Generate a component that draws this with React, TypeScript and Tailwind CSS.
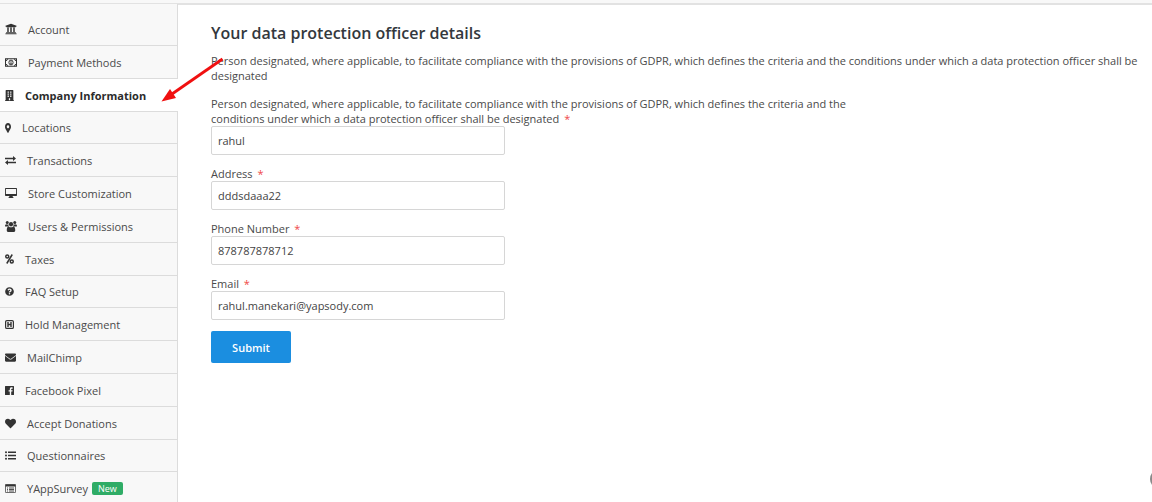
import { useState } from "react";
import type { ReactNode } from "react";
import {
  FaBuilding,
  FaEnvelope,
  FaHeart,
  FaMapMarkerAlt,
  FaQuestionCircle,
  FaUniversity,
} from "react-icons/fa";

const MoneyIcon = () => (
  <svg className="w-3 h-[9px]" viewBox="0 0 24 18" fill="none" stroke="currentColor" strokeWidth={2}>
    <rect x="1" y="1.500" width="22" height="15" />
    <ellipse cx="12" cy="9" rx="4.200" ry="4.800" />
    <path d="M12 6v6M10.500 11.500h3" strokeWidth={1.600} />
    <path d="M1 5.500a4 4 0 0 0 4-4M23 5.500a4 4 0 0 1-4-4M1 12.500a4 4 0 0 1 4 4M23 12.500a4 4 0 0 0-4 4" />
  </svg>
);

const ExchangeIcon = () => (
  <svg className="w-[11px] h-[9px]" viewBox="0 0 22 18" fill="currentColor">
    <path d="M0 3.500h16V0l6 5-6 5V6.500H0zM22 11.500H6V8l-6 5 6 5v-3.500h16z" />
  </svg>
);

const DesktopIcon = () => (
  <svg className="w-3 h-[10px]" viewBox="0 0 24 20" fill="currentColor">
    <path d="M1.500 0h21A1.500 1.500 0 0 1 24 1.500v13a1.500 1.500 0 0 1-1.500 1.500H15l1 2.500h1V20H7v-1.500h1L9 16H1.500A1.500 1.500 0 0 1 0 14.500v-13A1.500 1.500 0 0 1 1.500 0zM1.800 1.800v10.400h20.400V1.800z" />
  </svg>
);

const UsersIcon = () => (
  <svg className="w-3 h-[11px]" viewBox="0 0 24 22" fill="currentColor">
    <circle cx="4.500" cy="3.200" r="3" />
    <circle cx="19.500" cy="3.200" r="3" />
    <circle cx="12" cy="6.500" r="4.300" />
    <path d="M0 10.500C0 8 1 6.300 2.500 6.300c1 .8 3 .9 4.200.5 0 1.800.5 3.200 1.700 4.200H1.500C.6 11 0 11 0 10.500zM24 10.500c0-2.500-1-4.200-2.500-4.200-1 .8-3 .9-4.200.5 0 1.800-.5 3.200-1.700 4.200h6.900c.9 0 1.500 0 1.500-.5z" />
    <path d="M3.500 18.500c0-4.500 1.200-7.500 4.200-7.500 1.300 1.200 2.700 1.700 4.300 1.700s3-.5 4.300-1.700c3 0 4.200 3 4.200 7.500 0 2.200-1.300 3.500-3.300 3.500H6.800c-2 0-3.300-1.300-3.300-3.500z" />
  </svg>
);

const PercentIcon = () => (
  <svg className="w-[9px] h-[10px]" viewBox="0 0 18 20" fill="none" stroke="currentColor" strokeWidth={3}>
    <circle cx="4.500" cy="5.200" r="3" />
    <circle cx="13.500" cy="14.800" r="3" />
    <path d="M14.500 1 3.500 19" />
  </svg>
);

const HospitalIcon = () => (
  <svg className="w-[9px] h-[9px]" viewBox="0 0 18 18" fill="none" stroke="currentColor">
    <rect x="1.200" y="1.200" width="15.600" height="15.600" rx="2.500" strokeWidth={2.400} />
    <path d="M6 4v10M12 4v10M6 9h6" strokeWidth={2.800} />
  </svg>
);

const FacebookIcon = () => (
  <svg className="w-[9px] h-[9px]" viewBox="0 0 18 18" fill="currentColor">
    <path d="M1 0h16a1 1 0 0 1 1 1v16a1 1 0 0 1-1 1h-4.600v-7h2.400l.4-2.700h-2.800V6.600c0-.8.300-1.300 1.400-1.300h1.500V2.800c-.3 0-1.200-.1-2.200-.1-2.100 0-3.500 1.300-3.500 3.600v2H7.200V11h2.400v7H1a1 1 0 0 1-1-1V1a1 1 0 0 1 1-1z" />
  </svg>
);

const ListIcon = () => (
  <svg className="w-[11px] h-[9px]" viewBox="0 0 22 18" fill="currentColor">
    <circle cx="2" cy="2.500" r="2" />
    <circle cx="2" cy="9" r="2" />
    <circle cx="2" cy="15.500" r="2" />
    <path d="M6 1h16v3H6zM6 7.500h16v3H6zM6 14h16v3H6z" />
  </svg>
);

const ListAltIcon = () => (
  <svg className="w-[11px] h-[9px]" viewBox="0 0 22 18" fill="none" stroke="currentColor">
    <rect x=".8" y=".8" width="20.400" height="16.400" rx="1.500" strokeWidth={1.600} />
    <path d="M1 3h20" strokeWidth={4} />
    <path d="M4 8h2M8 8h10M4 11h2M8 11h10M4 14h2M8 14h10" strokeWidth={1.700} />
  </svg>
);

type NavItem = { label: string; icon: ReactNode; badge?: string };

const navItems: NavItem[] = [
  { label: "Account", icon: <FaUniversity className="w-3 h-3" /> },
  { label: "Payment Methods", icon: <MoneyIcon /> },
  { label: "Company Information", icon: <FaBuilding className="w-[9px] h-[11px]" preserveAspectRatio="none" /> },
  { label: "Locations", icon: <FaMapMarkerAlt className="w-[6px] h-[10px]" preserveAspectRatio="none" /> },
  { label: "Transactions", icon: <ExchangeIcon /> },
  { label: "Store Customization", icon: <DesktopIcon /> },
  { label: "Users & Permissions", icon: <UsersIcon /> },
  { label: "Taxes", icon: <PercentIcon /> },
  { label: "FAQ Setup", icon: <FaQuestionCircle className="w-[9px] h-[9px]" /> },
  { label: "Hold Management", icon: <HospitalIcon /> },
  { label: "MailChimp", icon: <FaEnvelope className="w-[11px] h-[11px]" /> },
  { label: "Facebook Pixel", icon: <FacebookIcon /> },
  { label: "Accept Donations", icon: <FaHeart className="w-[11px] h-[11px]" /> },
  { label: "Questionnaires", icon: <ListIcon /> },
  { label: "YAppSurvey", icon: <ListAltIcon />, badge: "New" },
];

const designation =
  "Person designated, where applicable, to facilitate compliance with the provisions of GDPR, which defines the criteria and the conditions under which a data protection officer shall be designated";

const fields = [
  { id: "name", label: designation, type: "text", value: "rahul" },
  { id: "address", label: "Address", type: "text", value: "dddsdaaa22" },
  { id: "phone", label: "Phone Number", type: "tel", value: "878787878712" },
  { id: "email", label: "Email", type: "email", value: "rahul.manekari@yapsody.com" },
];

export default function App() {
  const [active, setActive] = useState("Company Information");

  return (
    <div className="relative h-screen overflow-hidden flex flex-col bg-white text-[11px] leading-[15px] text-[#4a4a4a] font-['Open_Sans','Noto_Sans',sans-serif]">
      <div className="h-1 shrink-0 bg-[#f8f8f8] border-b border-[#e2e2e2]" />

      <div className="flex flex-1 items-stretch">
        {/* Settings menu */}
        <nav className="w-[178px] shrink-0">
          <div className="h-[9px] bg-[#f8f8f8] border-r border-[#dcdcdc]" />
          {navItems.map((item) => (
            <a
              key={item.label}
              href="#"
              onClick={(e) => {
                e.preventDefault();
                setActive(item.label);
              }}
              className={`flex items-center gap-[11px] h-[33px] [&:nth-child(5n)]:h-8 pl-[5px] border-b border-b-[#dcdcdc] whitespace-nowrap ${
                active === item.label
                  ? "bg-white font-bold text-[#2b2b2b]"
                  : "bg-[#f8f8f8] border-r border-r-[#dcdcdc] text-[#4a4a4a]"
              }`}
            >
              <span className="shrink-0 text-[#333333]">{item.icon}</span>
              <span className="flex items-center gap-1">
                {item.label}
                {item.badge && (
                  <span className="px-[6px] rounded-xs bg-[#2fac66] text-[9px] leading-[13px] text-white">
                    {item.badge}
                  </span>
                )}
              </span>
            </a>
          ))}
        </nav>

        {/* Officer details */}
        <main className="flex-1 min-w-0 border-t border-[#e2e2e2] pt-[18px] pl-[33px] pr-2">
          <h1 className="text-[16px] leading-[20px] font-semibold text-[#33383d]">
            Your data protection officer details
          </h1>
          <p className="mt-[10px]">{designation}</p>

          <form className="mt-[13px]" onSubmit={(e) => e.preventDefault()}>
            {fields.map((field) => (
              <div key={field.id} className="mb-[11px]">
                <label htmlFor={field.id} className="block max-w-[650px]">
                  {field.label} <span className="ml-[2px] text-[#f04848]">*</span>
                </label>
                <input
                  id={field.id}
                  type={field.type}
                  defaultValue={field.value}
                  className="block w-full max-w-[294px] h-[29px] px-[6px] rounded-xs border border-[#d6d6d6] bg-white text-[#444444] outline-none focus:border-[#1b8ee0]"
                />
              </div>
            ))}
            <button
              type="submit"
              className="h-8 w-20 rounded-xs bg-[#1b8ee0] font-semibold text-white hover:bg-[#177ec8]"
            >
              Submit
            </button>
          </form>
        </main>
      </div>

      {/* Pointer to the open section */}
      <svg
        className="absolute left-[160px] top-[56px] w-[64px] h-[48px] pointer-events-none"
        viewBox="0 0 64 48"
        aria-hidden="true"
      >
        <path d="M62.500 3 12 38" stroke="#f01010" strokeWidth={2.800} />
        <path d="M1.500 45.500 10 33 16 42z" fill="#f01010" />
      </svg>

      <button
        type="button"
        aria-label="Help"
        className="absolute -right-[18px] bottom-[13px] w-5 h-5 rounded-full bg-[#8a8a8a]"
      />
    </div>
  );
}
